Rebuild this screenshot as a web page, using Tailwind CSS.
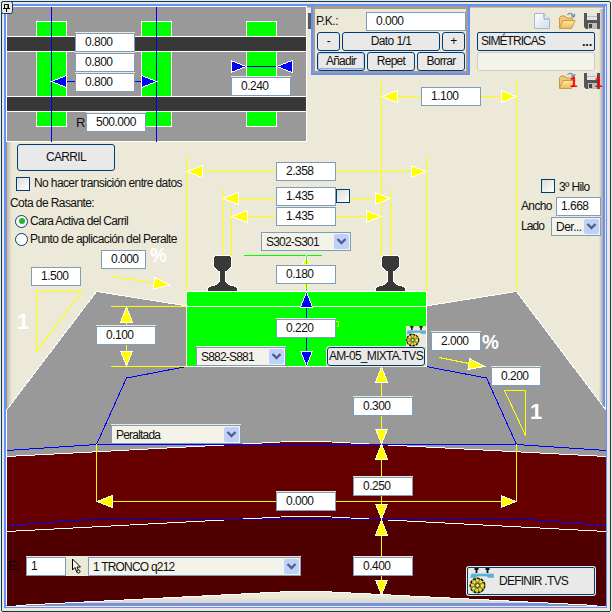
<!DOCTYPE html>
<html lang="es">
<head>
<meta charset="utf-8">
<title>Sección tipo</title>
<script src="https://cdn.jsdelivr.net/npm/@tailwindcss/browser@4"></script>
</head>
<body class="overflow-hidden bg-[#ece9d8]">
<main class="relative h-[612px] w-[612px] overflow-hidden bg-[#ece9d8] font-['Liberation_Sans',Arial,sans-serif] text-[12px] leading-[17px] tracking-[-0.5px] text-[#101010]">

<svg class="absolute inset-0" width="612" height="612" viewBox="0 0 612 612" shape-rendering="crispEdges">
  <defs>
    <linearGradient id="sideL"><stop offset="0" stop-color="#bfb9b3"/><stop offset="1" stop-color="#ece9d8"/></linearGradient>
    <linearGradient id="sideR"><stop offset="0" stop-color="#ece9d8"/><stop offset="1" stop-color="#a9a59c"/></linearGradient>
    <linearGradient id="sideB" x2="0" y2="1"><stop offset="0" stop-color="#ece9d8"/><stop offset="1" stop-color="#d5d2cc"/></linearGradient>
    <g id="ar"><path d="M0 0L-15 -6V6Z" stroke="#fff"/></g>
    <g id="al"><path d="M0 0L15 -6V6Z" stroke="#fff"/></g>
    <g id="au"><path d="M0 0L-6 15H6Z" stroke="#fff"/></g>
    <g id="ad"><path d="M0 0L-6 -15H6Z" stroke="#fff"/></g>
    <g id="rail"><path d="M-7 .5H7L9 2V12L3 17V26L6 29.500L12 31L15 33V36H-15V33L-12 31L-6 29.500L-3 26V17L-9 12V2Z" fill="#383838" stroke="#fff"/></g>
  </defs>
  <!-- window frame -->
  <rect x="7" y="9" width="5" height="594" fill="url(#sideL)"/>
  <rect x="599" y="9" width="4" height="594" fill="url(#sideR)"/>
  <rect x="7" y="597" width="597" height="7" fill="url(#sideB)"/>
  <rect x="1.500" y="1.500" width="609" height="610" rx="2" fill="none" stroke="#003c74"/>
  <rect x="4" y="4" width="2" height="604" fill="#6690ff"/>
  <rect x="4" y="4" width="603" height="2" fill="#6690ff"/>
  <rect x="6" y="6" width="600" height="1" fill="#a39a8d"/>
  <rect x="6" y="7" width="598" height="1" fill="#c5beb2"/>
  <rect x="6" y="6" width="1" height="600" fill="#9c9487"/>
  <rect x="603" y="6" width="2" height="600" fill="#6690ff"/>
  <rect x="605" y="6" width="1" height="600" fill="#ece9d8"/>
  <rect x="606" y="4" width="1" height="604" fill="#6690ff"/>
  <rect x="7" y="603" width="597" height="2" fill="#6690ff"/>
  <rect x="6" y="605" width="600" height="1" fill="#9c9487"/>
  <rect x="5" y="607" width="602" height="1" fill="#6690ff"/>

  <!-- layers -->
  <path d="M7 410L96 291.500L187 306V366H426V306L516 291.500L606 410V458H7Z" fill="#999"/>
  <path d="M7 456L290 441.500H322L606 456V531H7Z" fill="#600"/>
  <path d="M7 531L290 516.500H322L606 531V606L322 591.500H290L7 606Z" fill="#500000"/>
  <g fill="none" stroke="#fff">
    <path d="M6.500 410L96.500 291.500L187 306M426 306L516.500 291.500L606 410"/>
    <path d="M7 456.500L290 441.500H322L606 456.500M7 531.500L290 516.500H322L606 531.500M16 605.500L290 591.500H322L597 605.500M6.500 410V605"/>
  </g>
  <g fill="none" stroke="#00f">
    <path d="M187 366.500L126.500 378L96.500 444.500L7 450.500M426 366.500L486.500 378L516.500 444.500L606 450.500M96 444.500H517"/>
    <path d="M7 525.500L90 519.500M530 519.500L606 525.500"/>
    <path d="M90 519.500H530" stroke="#00c"/>
  </g>
  <rect x="186.500" y="291.500" width="240" height="75" fill="#0f0" stroke="#fff"/>
  <path d="M187 306.500H426" stroke="#fff"/>
  <path d="M336 321h2v5h-1" fill="none" stroke="#ff0"/>

  <!-- dimension lines -->
  <g fill="none" stroke="#ff0">
    <path d="M186.500 156V291M426.500 156V291M516.500 81V291M381.500 81V260M222.500 190V256M390.500 190V256M231.500 207V260"/>
    <path d="M382 96.500H516M187 171.500H426M223 198.500H390M232 216.500H381"/>
    <path d="M111 306.500H186M111 366.500H186M126.500 307V366M306.500 256V291"/>
    <path d="M381.500 367V595M96.500 444V501.500H516.500V444"/>
    <path d="M36.500 291.500H81.500L36.500 351.500ZM504.500 390.500H525.500V435.500ZM112 276.500L155 283.500M439 357.500L469 363.500"/>
  </g>
  <path d="M244 255.500H322" stroke="#0f0"/>
  <use href="#rail" x="222.500" y="255"/><use href="#rail" x="390.500" y="255"/>
  <g fill="#ff0">
    <use href="#al" x="382" y="96.500"/><use href="#ar" x="516" y="96.500"/>
    <use href="#al" x="187" y="171.500"/><use href="#ar" x="426" y="171.500"/>
    <use href="#al" x="223" y="198.500"/><use href="#ar" x="390" y="198.500"/>
    <use href="#al" x="232" y="216.500"/><use href="#ar" x="381" y="216.500"/>
    <use href="#au" x="126.500" y="307"/><use href="#ad" x="126.500" y="366"/>
    <use href="#au" x="306.500" y="256"/><use href="#ad" x="306.500" y="291"/>
    <use href="#au" x="381.500" y="367"/><use href="#ad" x="381.500" y="444"/>
    <use href="#au" x="381.500" y="444"/><use href="#ad" x="381.500" y="519"/>
    <use href="#au" x="381.500" y="520"/><use href="#ad" x="381.500" y="595"/>
    <use href="#al" x="97" y="501.500"/><use href="#ar" x="516" y="501.500"/>
    <path d="M154.500 277.500L170 285L153.500 289Z M469.500 358.500L484.500 366.500L468 369.500Z" stroke="#fff"/>
  </g>
  <path d="M306.500 256V291" stroke="#0f0" stroke-width=".8"/>
  <path d="M306.500 292V366" stroke="#00f"/>
  <g fill="#00f"><use href="#au" x="306.500" y="292"/><use href="#ad" x="306.500" y="366"/></g>

  <!-- plan view -->
  <g stroke="#fff">
    <rect x="6.500" y="6.500" width="300" height="135" fill="#999"/>
    <rect x="36.500" y="21.500" width="30" height="105" fill="#0f0"/>
    <rect x="141.500" y="21.500" width="30" height="105" fill="#0f0"/>
    <rect x="246.500" y="21.500" width="30" height="105" fill="#0f0"/>
    <rect x="6.500" y="36.500" width="300" height="15" fill="#383838"/>
    <rect x="6.500" y="96.500" width="300" height="15" fill="#383838"/>
  </g>
  <path d="M51.500 7V142M156.500 7V142M52 81.500H156M247 66.500H276" stroke="#0000e8"/>
  <g fill="#00f">
    <use href="#al" x="51.500" y="81.500"/><use href="#ar" x="156.500" y="81.500"/>
    <use href="#ar" x="246" y="66.500"/><use href="#al" x="277" y="66.500"/>
  </g>
  <rect x="308" y="13" width="4" height="16" rx="1" fill="#5a5a5a"/>

  <!-- pin -->
  <g shape-rendering="auto">
    <rect x="1.500" y="1.500" width="11" height="12" rx="2" fill="#ece9d8" stroke="#003c74"/>
    <path d="M3 8.500H10M4.500 8V4.500H8.500V8M8 4.500V8M6.500 9V12" fill="none" stroke="#000"/>
  </g>
</svg>

<!-- fields placed over the drawing -->
<div id="fields"></div>

<span class="absolute left-[76px] top-[114px] text-[13px]">R</span>
<span class="absolute left-[150px] top-[245px] origin-left scale-x-[0.9] text-[21px] font-bold leading-[20px] text-white">%</span>
<span class="absolute left-[482px] top-[332px] origin-left scale-x-[0.9] text-[21px] font-bold leading-[20px] text-white">%</span>
<span class="absolute left-[17px] top-[310px] text-[22px] font-bold leading-[23px] text-white">1</span>
<span class="absolute left-[530px] top-[400px] text-[22px] font-bold leading-[23px] text-white">1</span>
<span class="absolute left-[8px] top-[558px] text-black">E:</span>

<!-- rail level options -->
<section class="absolute left-[10px] top-[144px] flex w-[180px] flex-col">
  <button class="ml-[7px] h-[27px] w-[98px] rounded-[3px] border border-[#003c74] bg-[#e9e9e9] pb-px text-center tracking-[-0.7px]">CARRIL</button>
  <label class="mt-[5px] flex h-[15px] items-center gap-[4px] pl-[6px]"><i class="size-[14px] shrink-0 border border-[#003c74] bg-linear-to-br from-[#dcdcd7] to-white"></i><span class="whitespace-nowrap tracking-[-0.61px]">No hacer transición entre datos</span></label>
  <span class="mt-[4px] whitespace-nowrap tracking-[-0.58px]">Cota de Rasante:</span>
  <label class="mt-px flex h-[16px] items-center gap-[2px] pl-[5px]"><i class="flex size-[13px] shrink-0 items-center justify-center rounded-full border border-[#003c74] bg-white"><b class="size-[6px] rounded-full bg-[#28b428]"></b></i><span class="whitespace-nowrap tracking-[-0.67px]">Cara Activa del Carril</span></label>
  <label class="mt-[2px] flex h-[16px] items-center gap-[2px] pl-[5px]"><i class="size-[13px] shrink-0 rounded-full border border-[#003c74] bg-white"></i><span class="whitespace-nowrap tracking-[-0.6px]">Punto de aplicación del Peralte</span></label>
</section>

<!-- station panel -->
<section class="absolute left-[311px] top-[4px] h-[71px] w-[159px] border-2 border-[#6690ff]">
  <div class="flex h-full flex-col gap-px border-2 border-t-[3px] border-[#a59d90] bg-[#ece9d8] pl-[2px]">
    <div class="mt-[3px] flex h-[19px] items-center justify-between"><span class="-ml-px">P.K.:</span><span class="h-[19px] w-[100px] border border-[#7f9db9] bg-white pl-[9px]">0.000</span></div>
    <div class="flex h-[19px] gap-[2px] tracking-[-0.6px]">
      <button class="h-[19px] w-[23px] rounded-[3px] border border-[#003c74] bg-[#e9e9e9]">-</button>
      <button class="h-[19px] w-[98px] rounded-[3px] border border-[#003c74] bg-[#e9e9e9]">Dato 1/1</button>
      <button class="h-[19px] w-[23px] rounded-[3px] border border-[#003c74] bg-[#e9e9e9]">+</button>
    </div>
    <div class="flex h-[19px] gap-[2px] tracking-[-0.75px]">
      <button class="h-[19px] w-[48px] rounded-[3px] border border-[#003c74] bg-[#e9e9e9] shadow-[inset_0_0_0_1px_#b8cbf3,inset_0_-2px_0_#8ea9e8]">Añadir</button>
      <button class="h-[19px] w-[48px] rounded-[3px] border border-[#003c74] bg-[#e9e9e9]">Repet</button>
      <button class="h-[19px] w-[48px] rounded-[3px] border border-[#003c74] bg-[#e9e9e9]">Borrar</button>
    </div>
  </div>
</section>

<!-- file actions -->
<svg class="absolute h-0 w-0"><defs>
  <linearGradient id="paper" x2="1" y2="1"><stop offset="0" stop-color="#fff"/><stop offset="1" stop-color="#cfdcf0"/></linearGradient>
  <linearGradient id="fold" x2="0" y2="1"><stop offset="0" stop-color="#ffe7a6"/><stop offset="1" stop-color="#eeb95c"/></linearGradient>
  <symbol id="new" viewBox="0 0 18 18"><path d="M1.500 1.500H11L16.500 7V16.500H1.500Z" fill="url(#paper)" stroke="#a8b8cc"/><path d="M11 1.500V7H16.500" fill="#e3ebf6" stroke="#8ca0bc"/></symbol>
  <symbol id="open" viewBox="0 0 18 18"><path d="M1.500 16V5.500L3 4H7L8.500 6H14.500V9" fill="#f0c878" stroke="#c89848"/><path d="M1.500 16.500L5 8.500H17L13.500 16.500Z" fill="url(#fold)" stroke="#d09a45"/><path d="M9.500 3C11 .5 14.500 1 15.500 4M13 3.500L15.800 5L17 2" fill="none" stroke="#7890a4" stroke-width="1.300"/></symbol>
  <symbol id="save" viewBox="0 0 18 18"><path d="M1 1H17V17H3L1 15Z" fill="#555"/><path d="M4 1H14V8H4Z" fill="#e4e4e4"/><path d="M4 4.500H14" stroke="#bbb"/><path d="M5 11H14V17H5Z" fill="#bcbcbc"/><path d="M6 12H9V16H6Z" fill="#444"/></symbol>
  <symbol id="tvs" viewBox="0 0 24 26">
    <path d="M5 1H9M7 1V5M16 1H20M18 1V5" stroke="#111" stroke-width="1.800"/>
    <path d="M2 6H24V9.500H19L17 8H8L6 9.500H1Z" fill="#45b8ea" stroke="#83a8bc" stroke-width=".7"/>
    <circle cx="8" cy="17.500" r="7" fill="#8d8517" stroke="#222200" stroke-width="2" stroke-dasharray="3 1"/>
    <circle cx="8" cy="17.500" r="5" fill="none" stroke="#e6dc4c" stroke-width="3" stroke-dasharray="2.400 1.200"/>
    <circle cx="8" cy="17.500" r="2" fill="#eee79a" stroke="#333300" stroke-width=".8"/>
  </symbol>
</defs></svg>
<section class="absolute left-[477px] top-[12px] flex w-[124px] flex-col">
  <div class="flex h-[20px] justify-end gap-[7px]">
    <svg class="size-[18px]"><use href="#new"/></svg><svg class="size-[18px]"><use href="#open"/></svg><svg class="size-[18px]"><use href="#save"/></svg>
  </div>
  <button class="flex h-[19px] w-[118px] justify-between rounded-[2px] border border-[#003c74] bg-[#e9e9e9] pl-[3px] pr-[2px] tracking-[-0.95px]"><span>SIMÉTRICAS</span><b class="text-[13px] tracking-[-0.3px]">...</b></button>
  <div class="mt-px h-[19px] w-[118px] rounded-[3px] border border-[#d0cdc0] bg-[#f4f3e9]"></div>
  <div class="mt-px flex h-[18px] justify-end gap-[7px]">
    <span class="relative size-[18px]"><svg class="size-[18px]"><use href="#open"/></svg><b class="absolute -right-px top-[2px] text-[14px] text-[#f00]">1</b></span>
    <span class="relative size-[18px]"><svg class="size-[18px]"><use href="#save"/></svg><b class="absolute -right-px top-[2px] text-[14px] text-[#f00]">1</b></span>
  </div>
</section>

<!-- third rail -->
<section class="absolute left-[521px] top-[179px] flex w-[80px] flex-col gap-px">
  <label class="flex h-[17px] gap-[4px] pl-[20px]"><i class="size-[14px] shrink-0 border border-[#003c74] bg-linear-to-br from-[#dcdcd7] to-white"></i><span class="whitespace-nowrap leading-[16px] tracking-[-0.65px]">3º Hilo</span></label>
  <div class="flex h-[19px] items-center justify-between"><span class="tracking-[-0.65px]">Ancho</span><span class="h-[19px] w-[45px] border border-[#7f9db9] bg-white pl-[4px]">1.668</span></div>
  <div class="flex h-[19px] items-center justify-between"><span class="tracking-[-0.9px]">Lado</span><span class="flex h-[19px] w-[50px] justify-between border border-[#7f9db9] bg-[#f4f3e9] pl-[4px] pr-px pt-px leading-[16px]">Der...<svg class="h-[15px] w-[15px] rounded-[2px] bg-[#bed0fb]" viewBox="0 0 15 15"><path d="M3.500 5L7.500 9L11.500 5" fill="none" stroke="#4d6185" stroke-width="2.400"/></svg></span></div>
</section>

<!-- subgrade controls -->
<button class="absolute left-[327px] top-[347px] h-[19px] w-[98px] whitespace-nowrap rounded-[3px] border border-[#003c74] bg-[#e9e9e9] text-center tracking-[-0.7px] shadow-[0_0_0_1px_#ece9d8]">AM-05_MIXTA.TVS</button>
<svg class="absolute left-[406px] top-[326px] h-[21px] w-[20px] bg-[#ece9d8]" viewBox="0 0 24 26" preserveAspectRatio="none"><use href="#tvs" width="24" height="26"/></svg>
<div class="absolute left-[66px] top-[556px] h-[20px] w-[22px] bg-[#ece9d8]"><svg class="ml-[5px] mt-[2px]" width="12" height="17" viewBox="0 0 12 17"><path d="M1.500 1V12L4 9.500L6 14.500L8 13.500L6 9H9.500Z" fill="#f8f8f0" stroke="#000"/><circle cx="7.500" cy="13.500" r="1.500" fill="#fff" stroke="#000"/></svg></div>
<button class="absolute left-[467px] top-[567px] flex h-[28px] w-[128px] items-center rounded-[2px] border border-[#003c74] bg-[#e9e9e9] pl-px shadow-[0_0_0_1px_#ece9d8]"><svg class="h-[26px] w-[25px]"><use href="#tvs"/></svg><span class="ml-[5px] tracking-[-0.75px]">DEFINIR .TVS</span></button>

</main>
<script>
// [x, y, width, text, left padding]
const inputs = [
  [75,33,60,'0.800',9],[75,53,60,'0.800',9],[75,73,60,'0.800',9],[86,113,60,'500.000',9],[231,77,60,'0.240',9],
  [421,87,60,'1.100',9],[276,162,60,'2.358',9],[276,187,60,'1.435',9],[276,207,60,'1.435',9],[276,265,60,'0.180',9],
  [101,250,45,'0.000',9],[31,267,50,'1.500',9],[96,326,60,'0.100',9],[276,319,60,'0.220',9],[353,397,60,'0.300',9],
  [431,332,50,'2.000',9],[491,367,50,'0.200',9],[353,477,60,'0.250',9],[276,492,60,'0.000',9],[353,557,60,'0.400',9],[26,557,40,'1',4]
];
const combos = [[261,232,90,'S302-S301'],[196,347,90,'S882-S881'],[111,425,130,'Peraltada'],[88,557,213,'1 TRONCO q212']];
let html = '';
for (const [x,y,w,t,p] of inputs)
  html += `<div class="absolute h-[19px] border border-[#7f9db9] bg-white shadow-[0_-1px_0_#ece9d8]" style="left:${x}px;top:${y}px;width:${w}px;padding-left:${p}px">${t}</div>`;
for (const [x,y,w,t] of combos)
  html += `<div class="absolute flex h-[19px] justify-between whitespace-nowrap border border-[#7f9db9] bg-[#f4f3e9] pl-[4px] pr-px pt-px leading-[16px] tracking-[-0.8px] shadow-[0_-1px_0_#ece9d8]" style="left:${x}px;top:${y}px;width:${w}px">${t}<svg class="h-[15px] w-[15px] rounded-[2px] bg-[#bed0fb]" viewBox="0 0 15 15"><path d="M3.500 5L7.500 9L11.500 5" fill="none" stroke="#4d6185" stroke-width="2.400"/></svg></div>`;
html += '<i class="absolute left-[336px] top-[189px] size-[14px] border border-[#003c74] bg-linear-to-br from-[#dcdcd7] to-white"></i>';
document.getElementById('fields').innerHTML = html;
</script>
</body>
</html>
